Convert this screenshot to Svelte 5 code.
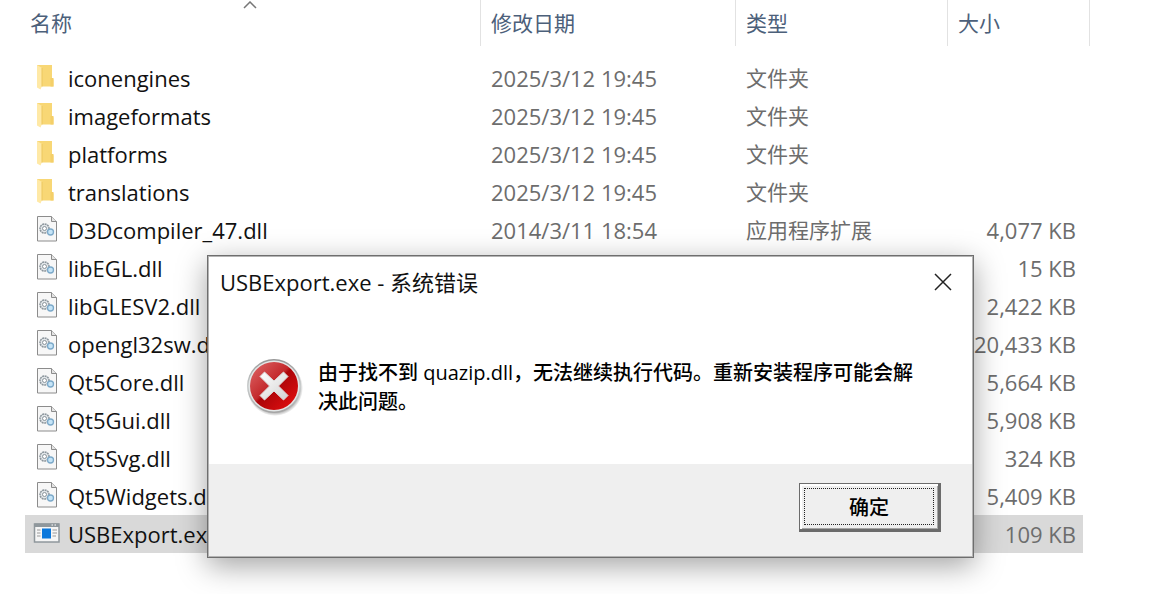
<script lang="ts">
	type Kind = 'folder' | 'dll' | 'exe';
	type Entry = { name: string; date: string; type: string; size: string; kind: Kind };

	const folder = (name: string): Entry => ({
		name,
		date: '2025/3/12 19:45',
		type: '文件夹',
		size: '',
		kind: 'folder'
	});
	const dll = (name: string, size: string, date = '', type = ''): Entry => ({
		name,
		date,
		type,
		size,
		kind: 'dll'
	});

	const entries: Entry[] = [
		folder('iconengines'),
		folder('imageformats'),
		folder('platforms'),
		folder('translations'),
		dll('D3Dcompiler_47.dll', '4,077 KB', '2014/3/11 18:54', '应用程序扩展'),
		dll('libEGL.dll', '15 KB'),
		dll('libGLESV2.dll', '2,422 KB'),
		dll('opengl32sw.dll', '20,433 KB'),
		dll('Qt5Core.dll', '5,664 KB'),
		dll('Qt5Gui.dll', '5,908 KB'),
		dll('Qt5Svg.dll', '324 KB'),
		dll('Qt5Widgets.dll', '5,409 KB'),
		{ name: 'USBExport.exe', date: '', type: '', size: '109 KB', kind: 'exe' }
	];

	let selected = $state('USBExport.exe');
	let open = $state(true);
</script>

<main class="explorer">
	<table>
		<thead>
			<tr>
				<th class="name" aria-sort="ascending">
					名称
					<svg class="sort" width="14" height="8" viewBox="0 0 14 8" aria-hidden="true">
						<path d="M1 7 L7 1 L13 7" fill="none" stroke="#777" stroke-width="1.5" />
					</svg>
				</th>
				<th class="date">修改日期</th>
				<th class="type">类型</th>
				<th class="size">大小</th>
			</tr>
		</thead>
		<tbody>
			{#each entries as entry}
				<tr class:selected={entry.name === selected} onclick={() => (selected = entry.name)}>
					<td class="name">
						<div class="file">
							<svg class="icon" width="28" height="28" viewBox="0 0 28 28" aria-hidden="true">
								{#if entry.kind === 'folder'}
									<path d="M4 1 H19 V14 L20.500 15.500 V22.500 H4 Z" fill="#f8d775" />
									<path d="M17.500 14 H20.500 V22.500 H17.500 Z" fill="#f4cf69" />
									<path d="M4 1 L9 4 V22 L7.500 25.500 L4 23.500 Z" fill="#ffe9a6" />
									<path d="M9 4 V22.500" stroke="#ecc75f" />
								{:else if entry.kind === 'dll'}
									<path d="M4.500 .5 H18.500 L23.500 5.500 V25 H4.500 Z" fill="#f7f7f7" stroke="#8c8c8c" />
									<path d="M18.500 .5 V5.500 H23.500" fill="#e4e4e4" stroke="#8c8c8c" />
									<circle cx="11.500" cy="12.500" r="4.500" fill="#e3e7ea" stroke="#8b959c" stroke-width="1.500" stroke-dasharray="2 .6" />
									<circle cx="11.500" cy="12.500" r="2" fill="#fff" stroke="#8b959c" />
									<circle cx="17.500" cy="16" r="3" fill="#c5e4f7" stroke="#7ca9c9" stroke-width="1.300" />
								{:else}
									<rect x="1.500" y="4" width="24.500" height="18" fill="#f5f5f5" stroke="#8f979c" stroke-width="1.500" />
									<rect x="1.500" y="3.500" width="24.500" height="3.500" fill="#8f979c" />
									<path d="M18.500 5 H20 M21.500 5 H23" stroke="#fff" />
									<rect x="9" y="8.500" width="9" height="10" fill="#0b78dc" />
									<path d="M4 10 H7.500 M4 13 H7.500 M4 16 H7.500 M19.500 10 H24 M19.500 13 H24 M19.500 16 H23" stroke="#999" />
								{/if}
							</svg>
							<span>{entry.name}</span>
						</div>
					</td>
					<td class="date">{entry.date}</td>
					<td class="type">{entry.type}</td>
					<td class="size">{entry.size}</td>
				</tr>
			{/each}
		</tbody>
	</table>
</main>

{#if open}
	<div class="dialog" role="alertdialog" aria-labelledby="title" aria-describedby="message">
		<header>
			<h1 id="title">USBExport.exe - 系统错误</h1>
			<button class="close" aria-label="关闭" onclick={() => (open = false)}>
				<svg width="18" height="18" viewBox="0 0 18 18">
					<path d="M1 1 L17 17 M17 1 L1 17" stroke="#222" stroke-width="1.500" />
				</svg>
			</button>
		</header>
		<div class="body">
			<svg class="error" width="56" height="58" viewBox="0 0 56 58" aria-hidden="true">
				<defs>
					<linearGradient id="red" x1="0" y1="0" x2="1" y2="1">
						<stop offset="0" stop-color="#e0696a" />
						<stop offset=".45" stop-color="#c3292c" />
						<stop offset=".5" stop-color="#ab0509" />
						<stop offset="1" stop-color="#ec1010" />
					</linearGradient>
					<linearGradient id="rim" x1="0" y1="0" x2="0" y2="1">
						<stop offset="0" stop-color="#969696" />
						<stop offset=".5" stop-color="#c9cdcd" />
						<stop offset="1" stop-color="#a4a4a4" />
					</linearGradient>
					<linearGradient id="cross" x1="0" y1="0" x2="1" y2="1">
						<stop offset="0" stop-color="#fff" />
						<stop offset="1" stop-color="#d2d2d2" />
					</linearGradient>
					<radialGradient id="shade">
						<stop offset=".85" stop-color="#000" stop-opacity=".35" />
						<stop offset="1" stop-color="#000" stop-opacity="0" />
					</radialGradient>
				</defs>
				<circle cx="28" cy="30" r="28" fill="url(#shade)" />
				<circle cx="27" cy="28" r="27" fill="url(#rim)" />
				<circle cx="27" cy="28" r="25.500" fill="#e3e6e6" />
				<circle cx="27" cy="28" r="24" fill="url(#red)" />
				<path
					d="M17.500 14 L27 23 L36.500 14 L41 18.500 L31.500 28 L41 37.500 L36.500 42 L27 33 L17.500 42 L13 37.500 L22.500 28 L13 18.500 Z"
					fill="url(#cross)"
					stroke="#dcdcdc"
					stroke-linejoin="round"
				/>
			</svg>
			<p id="message">由于找不到 quazip.dll，无法继续执行代码。重新安装程序可能会解决此问题。</p>
		</div>
		<footer>
			<button class="ok" onclick={() => (open = false)}><span>确定</span></button>
		</footer>
	</div>
{/if}

<style>
	:global(body) {
		background: #fff;
		font-family: 'Open Sans', 'Noto Sans CJK SC', sans-serif;
		overflow: hidden;
	}

	.explorer {
		padding: 0 68px 0 25px;
		font-size: 22px;
		line-height: 30px;
		color: #6d6d6d;
	}

	table {
		width: 100%;
		table-layout: fixed;
		border-collapse: separate;
		border-spacing: 0;
	}

	th {
		position: relative;
		box-sizing: border-box;
		height: 46px;
		padding: 0 10px;
		border-right: 1px solid #e2e2e2;
		font-size: 21px;
		font-weight: 400;
		text-align: left;
		color: #4c607a;
	}

	th.name {
		padding-left: 5px;
	}

	th.date {
		width: 255px;
	}

	th.type {
		width: 212px;
	}

	th.size {
		width: 142px;
	}

	.sort {
		position: absolute;
		top: 1px;
		left: calc(50% - 10px);
	}

	tbody::before {
		content: '';
		display: block;
		height: 13px;
	}

	td {
		height: 38px;
		padding: 0 10px;
		white-space: nowrap;
	}

	td.name {
		padding-left: 8px;
		color: #111;
	}

	td.type {
		font-size: 21px;
	}

	td.size {
		padding-right: 14px;
		text-align: right;
	}

	.file {
		display: flex;
		align-items: center;
		gap: 7px;
	}

	.selected {
		background: linear-gradient(#d9d9d9, #d9d9d9) no-repeat;
		background-size: calc(100% - 7px) 100%;
	}

	.dialog {
		position: absolute;
		top: 255px;
		left: 207px;
		right: 184px;
		border: 1px solid #6e6e6e;
		outline: 1px solid #b4b4b4;
		outline-offset: -2px;
		background: #fff;
		box-shadow: 0 8px 28px rgba(0, 0, 0, 0.36);
		color: #000;
	}

	header {
		display: flex;
		align-items: center;
		justify-content: space-between;
		height: 52px;
		padding: 0 12px;
	}

	h1 {
		margin: 0;
		font-size: 22px;
		line-height: 30px;
		font-weight: 400;
		color: #111;
	}

	.close {
		display: flex;
		padding: 9px;
		border: 0;
		background: none;
	}

	.body {
		display: flex;
		align-items: flex-start;
		gap: 15px;
		padding: 50px 44px 48px 39px;
	}

	.error {
		flex: none;
	}

	p {
		margin: 0;
		font-size: 20px;
		line-height: 29px;
		font-weight: 500;
	}

	footer {
		display: flex;
		justify-content: flex-end;
		margin: 0 1px 1px;
		padding: 19px 31px 24px;
		background: #efefef;
	}

	.ok {
		width: 142px;
		height: 49px;
		padding: 4px;
		border: 1px solid #6b6b6b;
		border-right: 3px solid #6b6b6b;
		border-bottom: 3px solid #6b6b6b;
		background: #efefef;
		box-shadow: inset 2px 2px #fff, inset -1px -1px #a5a5a5;
		font-family: inherit;
		font-size: 20px;
		font-weight: 500;
		color: #000;
	}

	.ok span {
		display: flex;
		align-items: center;
		justify-content: center;
		box-sizing: border-box;
		height: 100%;
		border: 1px dotted #222;
	}
</style>
